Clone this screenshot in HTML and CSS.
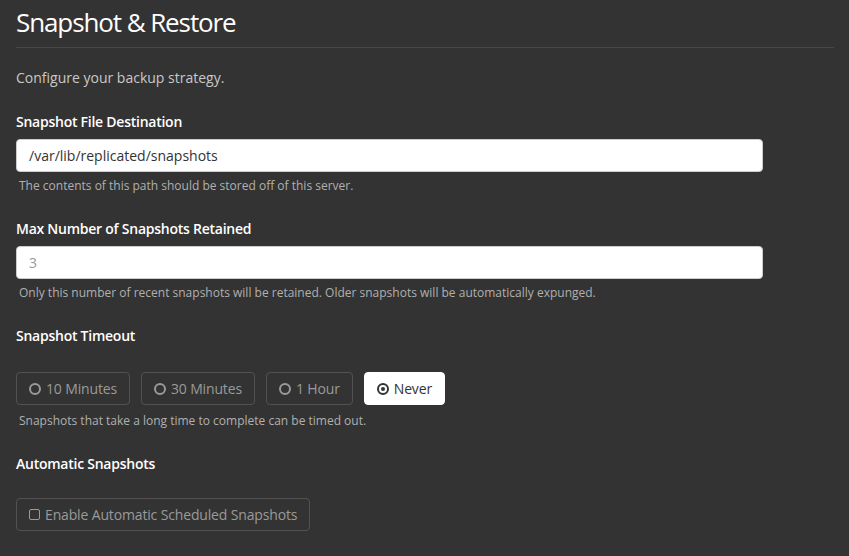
FILE: index.html
```html
<!DOCTYPE html>
<html>
<head>
<meta charset="utf-8">
<link rel="stylesheet" href="styles.css">
</head>
<body>
<div class="page">
  <h1 class="title">Snapshot &amp; Restore</h1>
  <p class="intro">Configure your backup strategy.</p>

  <div class="field first">
    <label class="label">Snapshot File Destination</label>
    <div class="input">/var/lib/replicated/snapshots</div>
    <div class="help">The contents of this path should be stored off of this server.</div>
  </div>

  <div class="field">
    <label class="label">Max Number of Snapshots Retained</label>
    <div class="input placeholder">3</div>
    <div class="help">Only this number of recent snapshots will be retained. Older snapshots will be automatically expunged.</div>
  </div>

  <div class="field">
    <label class="label">Snapshot Timeout</label>
    <div class="btns">
      <div class="btn"><span class="radio"></span>10 Minutes</div>
      <div class="btn"><span class="radio"></span>30 Minutes</div>
      <div class="btn"><span class="radio"></span>1 Hour</div>
      <div class="btn active"><span class="radio on"></span>Never</div>
    </div>
    <div class="help help-btns">Snapshots that take a long time to complete can be timed out.</div>
  </div>

  <div class="field auto-field">
    <label class="label">Automatic Snapshots</label>
    <div class="btns auto">
      <div class="btn"><span class="check"></span>Enable Automatic Scheduled Snapshots</div>
    </div>
  </div>
</div>
</body>
</html>
```
FILE: styles.css
```css
* { box-sizing: border-box; }
html, body { margin: 0; padding: 0; background: #333333; }
body { font-family: "Open Sans", "Noto Sans", sans-serif; color: #fff; }
.page { padding: 0 15px 0 16px; }
.title {
  margin: 0;
  padding: 5px 0 8px;
  font-size: 26px;
  font-weight: 500;
  letter-spacing: -1.1px;
  line-height: 34px;
  color: #fff;
  border-bottom: 1px solid #474747;
}
.intro { margin: 20px 0 0; font-size: 14px; line-height: 20px; color: #c8c8c8; }
.field { margin-top: 24px; width: 747px; }
.field.first { margin-top: 24px; }
.label { display: block; font-size: 14px; font-weight: 600; letter-spacing: -0.25px; line-height: 20px; color: #fff; }
.input {
  margin-top: 7px;
  height: 33px;
  background: #fff;
  border: 1px solid #ccc;
  border-radius: 4px;
  padding: 0 12px;
  font-size: 14px;
  line-height: 31px;
  color: #333;
}
.input.placeholder { color: #999; }
.help { margin-top: 5px; padding-left: 3px; font-size: 12px; line-height: 18px; color: #b0b0b0; }
.help.help-btns { margin-top: 7px; }
.btns { display: flex; gap: 11px; margin-top: 26px; }
.btn {
  display: flex;
  align-items: center;
  height: 33px;
  padding: 0 12px;
  border: 1px solid #525252;
  border-radius: 4px;
  font-size: 14px;
  letter-spacing: -0.15px;
  color: #9a9a9a;
}
.btn.active { background: #fff; border-color: #fff; color: #333; }
.radio {
  flex: none;
  width: 12px; height: 12px;
  border: 2px solid #9a9a9a;
  border-radius: 50%;
  margin-right: 5px;
  position: relative;
}
.radio.on { border-color: #333; }
.radio.on::after {
  content: ""; position: absolute; left: 2px; top: 2px;
  width: 4px; height: 4px; border-radius: 50%; background: #333;
}
.check {
  flex: none;
  width: 11px; height: 11px;
  border: 1.5px solid #9a9a9a;
  border-radius: 2px;
  margin-right: 5px;
}
.auto-field { margin-top: 24px; }
.auto { margin-top: 24px; }
```
